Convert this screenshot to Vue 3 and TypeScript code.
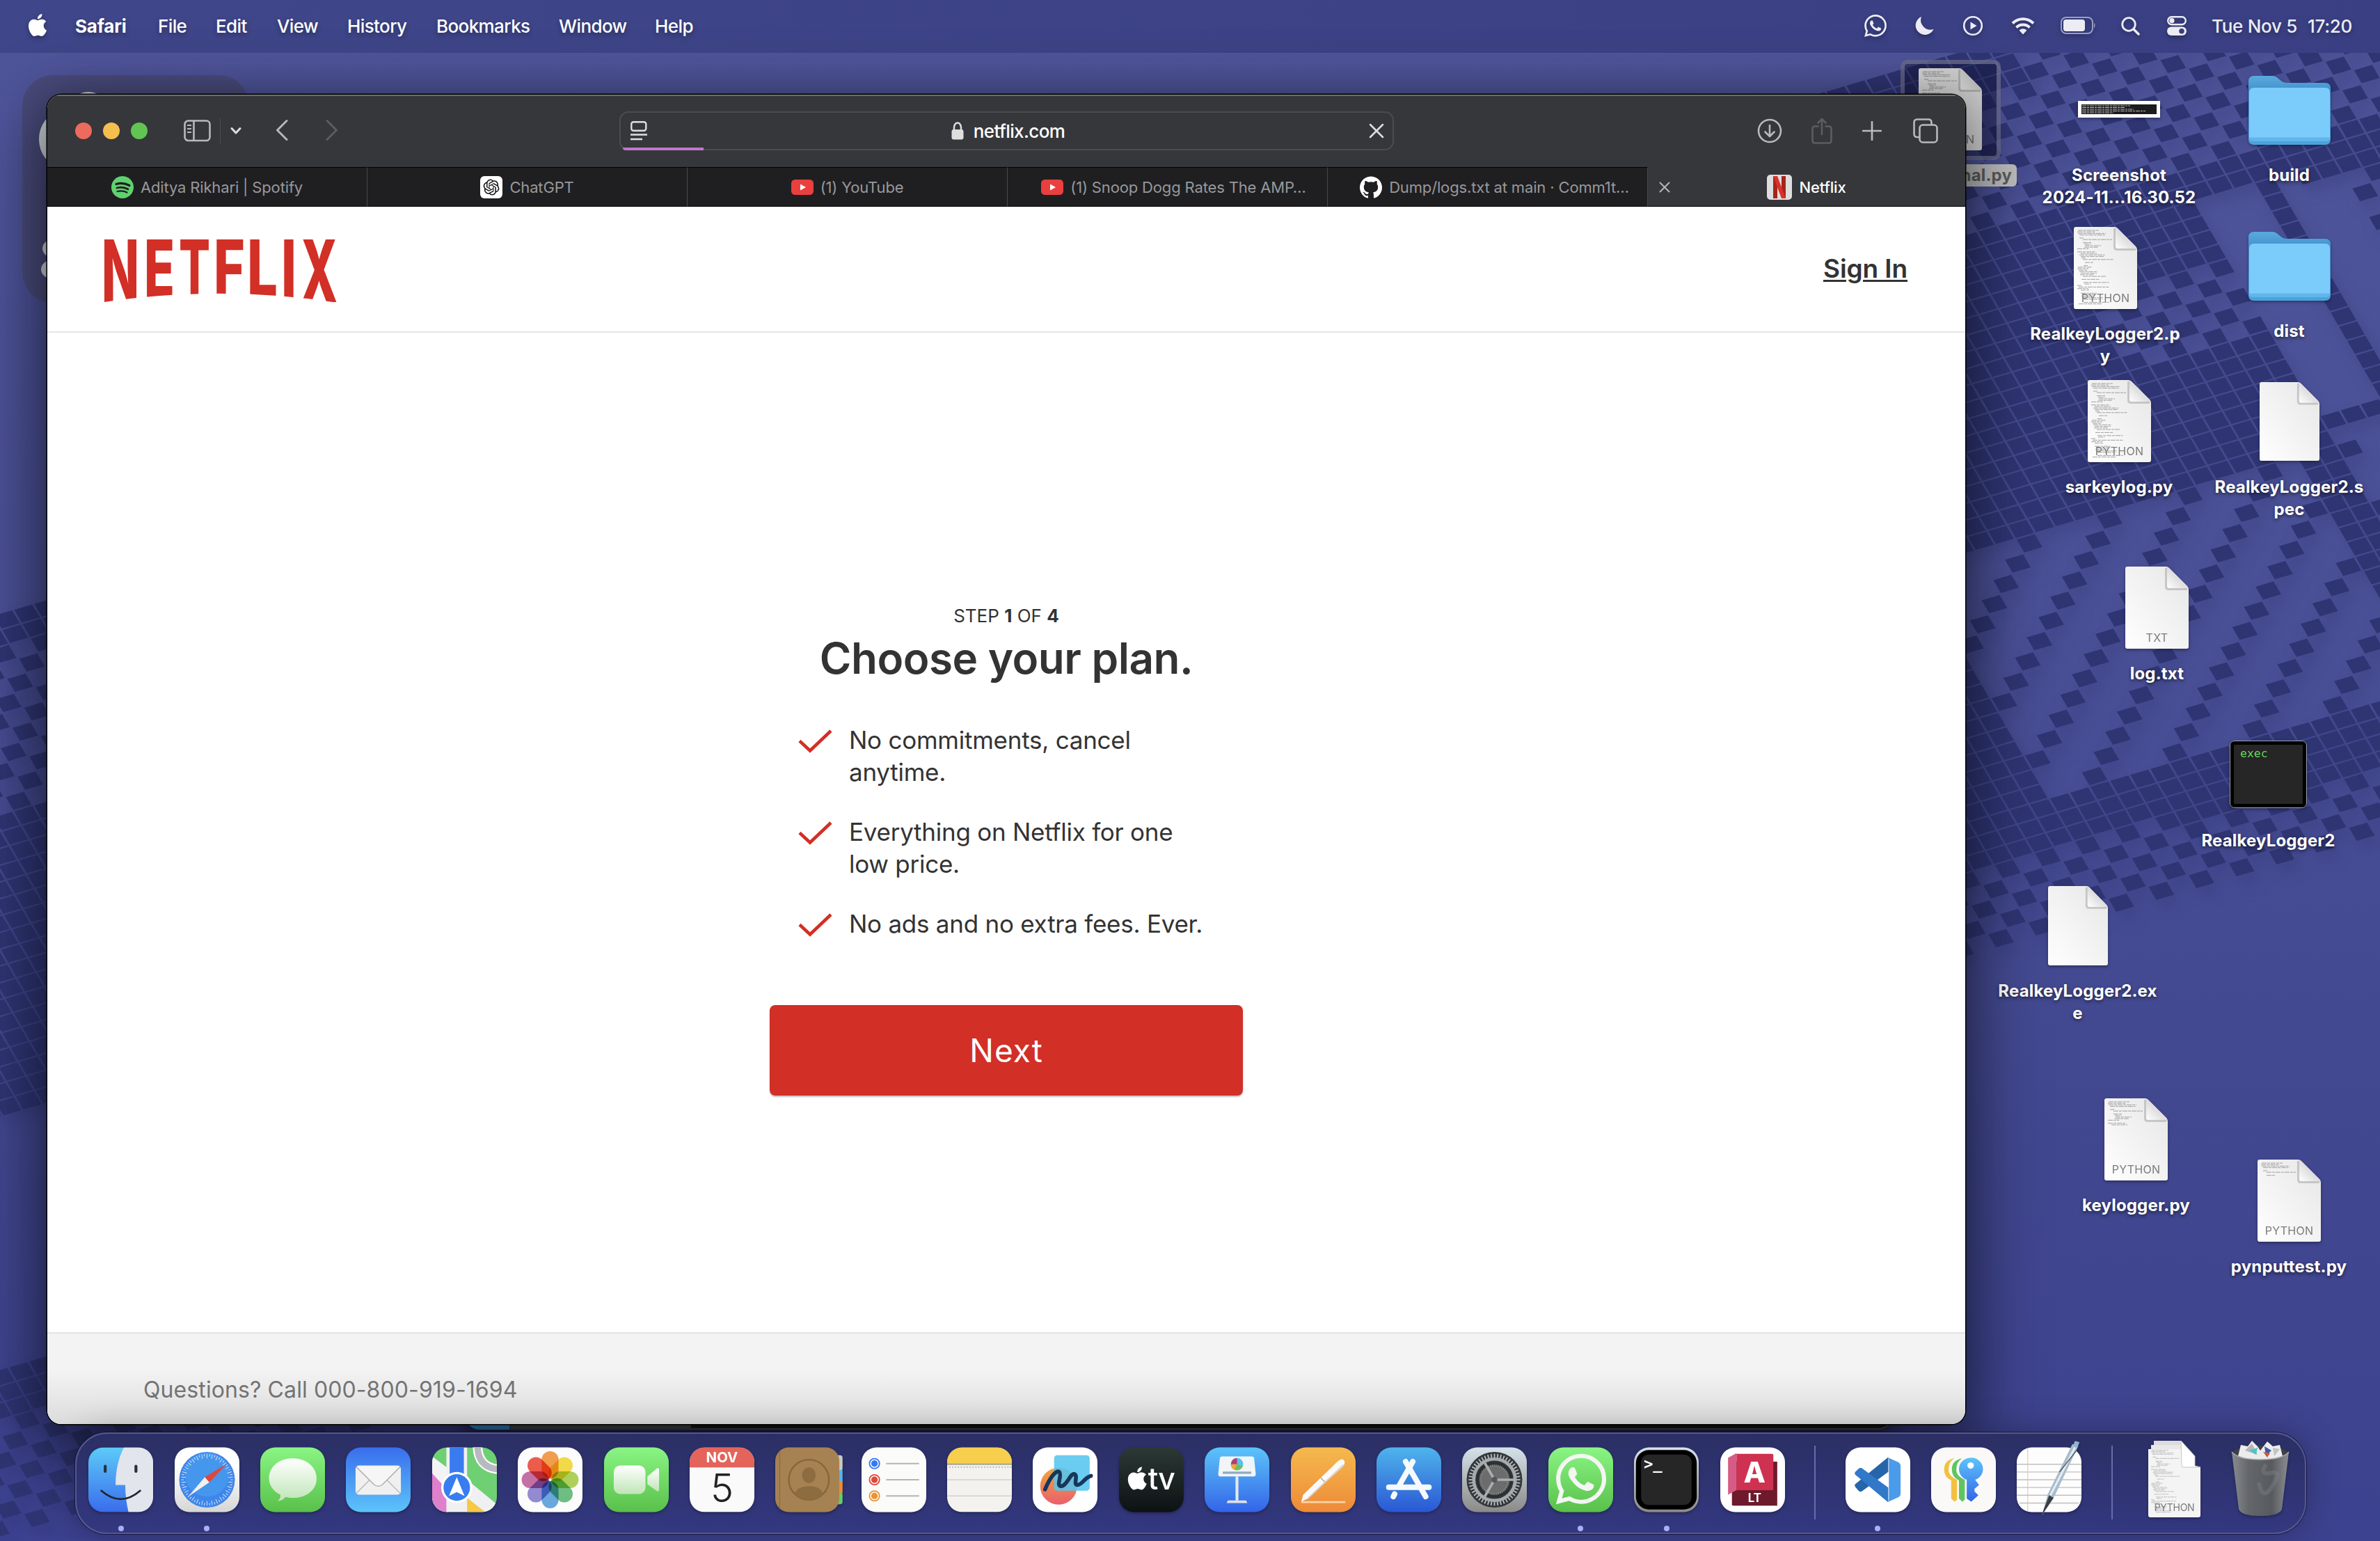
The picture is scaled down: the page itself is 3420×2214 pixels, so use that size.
<script setup lang="ts">
interface DesktopItem {
  kind: 'code' | 'doc' | 'folder' | 'shot' | 'exec'
  cx: number
  top: number
  w: number
  h: number
  base: number
  label: string[]
  tag?: string
  rows?: number
  selected?: boolean
}

const APPLE =
  'M12.152 6.896c-.948 0-2.415-1.078-3.96-1.04-2.04.027-3.91 1.183-4.961 3.014-2.117 3.675-.546 9.103 1.519 12.09 1.013 1.454 2.208 3.09 3.792 3.039 1.52-.065 2.09-.987 3.935-.987 1.831 0 2.35.987 3.96.948 1.637-.026 2.676-1.48 3.676-2.948 1.156-1.688 1.636-3.325 1.662-3.415-.039-.013-3.182-1.221-3.22-4.857-.026-3.04 2.48-4.494 2.597-4.559-1.429-2.09-3.623-2.324-4.39-2.376-2-.156-3.675 1.09-4.61 1.09zM15.53 3.83c.843-1.012 1.4-2.427 1.245-3.83-1.207.052-2.662.805-3.532 1.818-.78.896-1.454 2.338-1.273 3.714 1.338.104 2.715-.688 3.559-1.701'
const GITHUB =
  'M12 .297c-6.63 0-12 5.373-12 12 0 5.303 3.438 9.8 8.205 11.385.6.113.82-.258.82-.577 0-.285-.01-1.04-.015-2.04-3.338.724-4.042-1.61-4.042-1.61C4.422 18.07 3.633 17.7 3.633 17.7c-1.087-.744.084-.729.084-.729 1.205.084 1.838 1.236 1.838 1.236 1.07 1.835 2.809 1.305 3.495.998.108-.776.417-1.305.76-1.605-2.665-.3-5.466-1.332-5.466-5.93 0-1.31.465-2.38 1.235-3.22-.135-.303-.54-1.523.105-3.176 0 0 1.005-.322 3.3 1.23.96-.267 1.98-.399 3-.405 1.02.006 2.04.138 3 .405 2.28-1.552 3.285-1.23 3.285-1.23.645 1.653.24 2.873.12 3.176.765.84 1.23 1.91 1.23 3.22 0 4.61-2.805 5.625-5.475 5.92.42.36.81 1.096.81 2.22 0 1.606-.015 2.896-.015 3.286 0 .315.21.69.825.57C20.565 22.092 24 17.592 24 12.297c0-6.627-5.373-12-12-12'
const OPENAI =
  'M22.2819 9.8211a5.9847 5.9847 0 0 0-.5157-4.9108 6.0462 6.0462 0 0 0-6.5098-2.9A6.0651 6.0651 0 0 0 4.9807 4.1818a5.9847 5.9847 0 0 0-3.9977 2.9 6.0462 6.0462 0 0 0 .7427 7.0966 5.98 5.98 0 0 0 .511 4.9107 6.051 6.051 0 0 0 6.5146 2.9001A5.9847 5.9847 0 0 0 13.2599 24a6.0557 6.0557 0 0 0 5.7718-4.2058 5.9894 5.9894 0 0 0 3.9977-2.9001 6.0557 6.0557 0 0 0-.7475-7.0729zm-9.022 12.6081a4.4755 4.4755 0 0 1-2.8764-1.0408l.1419-.0804 4.7783-2.7582a.7948.7948 0 0 0 .3927-.6813v-6.7369l2.02 1.1686a.071.071 0 0 1 .038.052v5.5826a4.504 4.504 0 0 1-4.4945 4.4944zm-9.6607-4.1254a4.4708 4.4708 0 0 1-.5346-3.0137l.142.0852 4.783 2.7582a.7712.7712 0 0 0 .7806 0l5.8428-3.3685v2.3324a.0804.0804 0 0 1-.0332.0615L9.74 19.9502a4.4992 4.4992 0 0 1-6.1408-1.6464zM2.3408 7.8956a4.485 4.485 0 0 1 2.3655-1.9728V11.6a.7664.7664 0 0 0 .3879.6765l5.8144 3.3543-2.0201 1.1685a.0757.0757 0 0 1-.071 0l-4.8303-2.7865A4.504 4.504 0 0 1 2.3408 7.872zm16.5963 3.8558L13.1038 8.364 15.1192 7.2a.0757.0757 0 0 1 .071 0l4.8303 2.7913a4.4944 4.4944 0 0 1-.6765 8.1042v-5.6772a.79.79 0 0 0-.407-.667zm2.0107-3.0231l-.142-.0852-4.7735-2.7818a.7759.7759 0 0 0-.7854 0L9.409 9.2297V6.8974a.0662.0662 0 0 1 .0284-.0615l4.8303-2.7866a4.4992 4.4992 0 0 1 6.6802 4.66zM8.3065 12.863l-2.02-1.1638a.0804.0804 0 0 1-.038-.0567V6.0742a4.4992 4.4992 0 0 1 7.3757-3.4537l-.142.0805L8.704 5.459a.7948.7948 0 0 0-.3927.6813zm1.0976-2.3654l2.602-1.4998 2.6069 1.4998v2.9994l-2.5974 1.4997-2.6067-1.4997Z'
const WHATSAPP =
  'M17.472 14.382c-.297-.149-1.758-.867-2.03-.967-.273-.099-.471-.148-.67.15-.197.297-.767.966-.94 1.164-.173.199-.347.223-.644.075-.297-.15-1.255-.463-2.39-1.475-.883-.788-1.48-1.761-1.653-2.059-.173-.297-.018-.458.13-.606.134-.133.298-.347.446-.52.149-.174.198-.298.298-.497.099-.198.05-.371-.025-.52-.075-.149-.669-1.612-.916-2.207-.242-.579-.487-.5-.669-.51-.173-.008-.371-.01-.57-.01-.198 0-.52.074-.792.372-.272.297-1.04 1.016-1.04 2.479 0 1.462 1.065 2.875 1.213 3.074.149.198 2.096 3.2 5.077 4.487.709.306 1.262.489 1.694.625.712.227 1.36.195 1.871.118.571-.085 1.758-.719 2.006-1.413.248-.694.248-1.289.173-1.413-.074-.124-.272-.198-.57-.347m-5.421 7.403h-.004a9.87 9.87 0 01-5.031-1.378l-.361-.214-3.741.982.998-3.648-.235-.374a9.86 9.86 0 01-1.51-5.26c.001-5.45 4.436-9.884 9.888-9.884 2.64 0 5.122 1.03 6.988 2.898a9.825 9.825 0 012.893 6.994c-.003 5.45-4.437 9.884-9.885 9.884m8.413-18.297A11.815 11.815 0 0012.05 0C5.495 0 .16 5.335.157 11.892c0 2.096.547 4.142 1.588 5.945L.057 24l6.305-1.654a11.882 11.882 0 005.683 1.448h.005c6.554 0 11.89-5.335 11.893-11.893a11.821 11.821 0 00-3.48-8.413z'

const menus = [
  { t: 'Safari', w: 119 },
  { t: 'File', w: 83 },
  { t: 'Edit', w: 88 },
  { t: 'View', w: 101 },
  { t: 'History', w: 128 },
  { t: 'Bookmarks', w: 176 },
  { t: 'Window', w: 138 },
  { t: 'Help', w: 70 },
]

const tabs = [
  { icon: 'spotify', t: 'Aditya Rikhari | Spotify', shift: 0 },
  { icon: 'chatgpt', t: 'ChatGPT', shift: 0 },
  { icon: 'youtube', t: '(1) YouTube', shift: 0 },
  { icon: 'youtube', t: '(1) Snoop Dogg Rates The AMP…', shift: 18 },
  { icon: 'github', t: 'Dump/logs.txt at main · Comm1t…', shift: 20 },
  { icon: 'netflix', t: 'Netflix', shift: 0 },
]

// glyph, left edge, advance it is stretched to, baseline
const wordmark = [
  { c: 'N', x: 146, w: 54, b: 434 },
  { c: 'E', x: 207, w: 44, b: 427 },
  { c: 'T', x: 257, w: 45, b: 424 },
  { c: 'F', x: 307, w: 45, b: 422.5 },
  { c: 'L', x: 355, w: 44, b: 425 },
  { c: 'I', x: 404, w: 22, b: 427 },
  { c: 'X', x: 432, w: 53, b: 434 },
]

const perks = [
  ['No commitments, cancel', 'anytime.'],
  ['Everything on Netflix for one', 'low price.'],
  ['No ads and no extra fees. Ever.'],
]

const items: DesktopItem[] = [
  { kind: 'code', cx: 2802, top: 98, w: 91, h: 118, base: 260, label: ['RealkeyLoggerfinal.py'], tag: 'PYTHON', rows: 50, selected: true },
  { kind: 'shot', cx: 3045, top: 145, w: 118, h: 24, base: 260, label: ['Screenshot', '2024-11...16.30.52'] },
  { kind: 'folder', cx: 3289.5, top: 109, w: 118, h: 99, base: 260, label: ['build'] },
  { kind: 'code', cx: 3025, top: 326, w: 91, h: 118, base: 488, label: ['RealkeyLogger2.p', 'y'], tag: 'PYTHON', rows: 50 },
  { kind: 'folder', cx: 3289.5, top: 333, w: 118, h: 99, base: 484, label: ['dist'] },
  { kind: 'code', cx: 3045, top: 546, w: 91, h: 118, base: 708, label: ['sarkeylog.py'], tag: 'PYTHON', rows: 50 },
  { kind: 'doc', cx: 3289.5, top: 549, w: 86, h: 113, base: 708, label: ['RealkeyLogger2.s', 'pec'] },
  { kind: 'doc', cx: 3099.5, top: 814, w: 91, h: 118, base: 976, label: ['log.txt'], tag: 'TXT' },
  { kind: 'exec', cx: 3259.5, top: 1064, w: 111, h: 97, base: 1216, label: ['RealkeyLogger2'] },
  { kind: 'doc', cx: 2985.5, top: 1273, w: 86, h: 114, base: 1432, label: ['RealkeyLogger2.ex', 'e'] },
  { kind: 'code', cx: 3069.5, top: 1578, w: 91, h: 118, base: 1740, label: ['keylogger.py'], tag: 'PYTHON', rows: 16 },
  { kind: 'code', cx: 3289, top: 1666, w: 91, h: 118, base: 1828, label: ['pynputtest.py'], tag: 'PYTHON', rows: 9 },
]

// Miniature source listing printed on code documents
function listing(rows: number): string {
  let d = ''
  for (let r = 0; r < rows; r++) {
    if (r % 9 === 4 || r % 13 === 7) continue
    const h = (r * 73 + 19) % 31
    const indent = 5 + (Math.floor(r / 3) % 4) * 3 + (h % 3)
    const len = 6 + (h % 12) * 3.4
    const y = 5 + r * 2.2
    const end = Math.min(indent + len, y < 36 ? 55 : 78)
    d += `M${indent} ${y.toFixed(1)}H${end.toFixed(1)}`
  }
  return d
}

type Mode = 'none' | 'dense' | 'checker' | 'diag'
function modeAt(x: number, y: number): Mode {
  if (x < 1000) {
    const u = y + 0.27 * x
    if (u < 885) return 'none'
    if (u < 925) return 'dense'
    if (u < 1165) return 'checker'
    if (u < 1610) return 'dense'
    if (u < 1965) return 'none'
    if (u < 2030) return 'dense'
    if (u < 2200) return 'checker'
    return 'none'
  }
  const u = y + 0.29 * (x - 2824)
  const v = x - 0.58 * (y - 100)
  if (u < 80 || u > 1375) return 'none'
  if (u < 340) return x < 2900 && u < 150 ? 'dense' : 'checker'
  if (u < 395) return 'dense'
  if (u < 805) {
    if (v < 3055) return u > 490 && u < 600 && v > 2800 ? 'checker' : 'dense'
    if (v > 3150 && v < 3190) return 'dense'
    if (v > 3290) return 'checker'
    if (u > 735 && u < 760) return 'dense'
    return 'none'
  }
  if (u < 1185) {
    if (v < 2350) return 'dense'
    if (v > 2985 && v < 3040) return 'dense'
    return 'diag'
  }
  if (u < 1265) return 'dense'
  return 'checker'
}

function buildTiles(): string {
  let d = ''
  const at = (p: number, q: number) => [2881.2 + p * 28.8 + q * 12, 804.3 - p * 8.5 + q * 20.6]
  for (let j = -70; j < 80; j++) {
    for (let i = -140; i < 60; i++) {
      const [x, y] = at(i + 0.45, j + 0.45)
      if (x < -40 || x > 3460 || (x > 560 && x < 2600) || y < 40 || y > 2250) continue
      const m = modeAt(x, y)
      if (m === 'none') continue
      const k = i + j + 400
      if (m === 'checker' && k % 2) continue
      if (m === 'diag' && k % 4) continue
      const pts = [at(i, j), at(i + 0.9, j), at(i + 0.9, j + 0.9), at(i, j + 0.9)]
      d += 'M' + pts.map((p) => p[0].toFixed(1) + ' ' + p[1].toFixed(1)).join('L') + 'Z'
    }
  }
  return d
}
const tiles = buildTiles()

const petals = ['#f2953a', '#f3d834', '#a8cf4a', '#5fb878', '#5aa0dc', '#8a7fd0', '#c0629e', '#ee4b3a']
const ticks = Array.from({ length: 60 }, (_, i) => i * 6)
const teeth = Array.from({ length: 48 }, (_, i) => i * 7.5)
</script>

<template>
  <div class="screen">
    <svg class="wallpaper" viewBox="0 0 3420 2214" aria-hidden="true"><path :d="tiles" fill="#2f3573" /></svg>

    <header class="menubar">
      <svg class="apple" viewBox="0 0 24 24"><path :d="APPLE" fill="#fff" /></svg>
      <span v-for="(m, i) in menus" :key="m.t" class="menu" :class="{ bold: i === 0 }" :style="{ width: m.w + 'px' }">{{ m.t }}</span>
      <div class="status">
        <svg width="32" height="32" viewBox="0 0 24 24"><path :d="WHATSAPP" fill="#ececf4" /></svg>
        <svg class="ml40" width="28" height="28" viewBox="0 0 28 28"><path d="M10 1A13.5 13.5 0 1 0 27.500 19A14 14 0 0 1 10 1Z" fill="#ececf4" /></svg>
        <svg class="ml41" width="30" height="30" viewBox="0 0 30 30"><circle cx="15" cy="15" r="12.800" fill="none" stroke="#ececf4" stroke-width="2.600" /><path d="M11.500 9.500V20.500L20.500 15Z" fill="#ececf4" /></svg>
        <svg class="ml40" width="34" height="28" viewBox="0 0 34 28"><g fill="none" stroke="#ececf4" stroke-width="4"><path d="M2 10.500A21 21 0 0 1 32 10.500" /><path d="M7.500 16.500A13.500 13.500 0 0 1 26.500 16.500" /></g><path d="M11.500 20.500A8 8 0 0 1 22.500 20.500L17 26.500Z" fill="#ececf4" /></svg>
        <svg class="ml37" width="51" height="26" viewBox="0 0 51 26"><rect x="1" y="1" width="45" height="23" rx="7" fill="none" stroke="#9a9dc6" stroke-width="2" /><rect x="4" y="4" width="31" height="17" rx="4" fill="#ececf4" /><path d="M48 8.500Q51 12.500 48 16.500Z" fill="#9a9dc6" /></svg>
        <svg class="ml36" width="27" height="27" viewBox="0 0 27 27"><circle cx="11" cy="11" r="9.300" fill="none" stroke="#ececf4" stroke-width="2.800" /><path d="M18 18L25 25" stroke="#ececf4" stroke-width="3.400" stroke-linecap="round" /></svg>
        <svg class="ml39" width="28" height="28" viewBox="0 0 28 28"><rect x="1.200" y="1.200" width="25.600" height="11" rx="5.500" fill="none" stroke="#ececf4" stroke-width="2.400" /><circle cx="7" cy="6.700" r="3.600" fill="#ececf4" /><rect x="0" y="15.500" width="28" height="12.500" rx="6.200" fill="#ececf4" /><circle cx="21" cy="21.700" r="3.800" fill="#3a3f82" /></svg>
        <span class="date">Tue Nov 5</span><span class="time">17:20</span>
      </div>
    </header>

    <div class="widget"><i class="w1"></i><i class="w2"></i><i class="w3"></i><i class="w4"></i></div>

    <div
      v-for="(it, n) in items"
      :key="n"
      class="item"
      :class="{ selected: it.selected }"
      :style="{ left: it.cx - 150 + 'px', top: it.top + 'px' }"
    >
      <svg v-if="it.kind === 'code' || it.kind === 'doc'" class="pic" :width="it.w" :height="it.h" viewBox="0 0 91 118" preserveAspectRatio="none">
        <defs>
          <linearGradient :id="'pg' + n" x1="1" y1="0" x2="0" y2="1"><stop offset="0" stop-color="#e6e6e6" /><stop offset="1" stop-color="#fff" /></linearGradient>
          <linearGradient :id="'fd' + n" x1="1" y1="0" x2="0" y2="1"><stop offset=".5" stop-color="#dcdcdc" /><stop offset="1" stop-color="#fff" /></linearGradient>
        </defs>
        <path d="M3 0H58Q61 0 63 2L89 28Q91 30 91 33V115Q91 118 88 118H3Q0 118 0 115V3Q0 0 3 0Z" :fill="`url(#pg${n})`" />
        <path v-if="it.rows" :d="listing(it.rows)" stroke="#777" stroke-width=".9" stroke-dasharray="7 1 4 1" opacity=".75" />
        <path d="M59 2V29Q59 32 62 32H89" fill="none" stroke="#000" stroke-opacity=".16" stroke-width="4" />
        <path d="M60 0.500V28Q60 31 63 31H90.500Z" :fill="`url(#fd${n})`" />
        <text v-if="it.tag" x="45.500" y="108" text-anchor="middle" class="tag">{{ it.tag }}</text>
      </svg>
      <svg v-else-if="it.kind === 'folder'" class="pic" :width="it.w" :height="it.h" viewBox="0 0 118 99">
        <defs>
          <linearGradient id="fb" x1="0" y1="0" x2="0" y2="1"><stop offset="0" stop-color="#5aaade" /><stop offset=".2" stop-color="#4593cd" /><stop offset="1" stop-color="#4ba3dc" /></linearGradient>
        </defs>
        <path d="M0 8Q0 0 8 0H34Q39 0 43 4L48 8Q51 10 55 10H110Q118 10 118 18V91Q118 99 110 99H8Q0 99 0 91Z" fill="url(#fb)" />
        <path d="M1 24Q1 17 8 17H110Q117 17 117 24V89H1Z" fill="#7bcbfb" />
        <path d="M1 88.500H117V90Q117 93 113 94H5Q1 93 1 90Z" fill="#62b5ea" />
      </svg>
      <div v-else-if="it.kind === 'shot'" class="pic shot">
        <svg width="108" height="14" viewBox="0 0 108 14"><rect width="108" height="14" fill="#1c1c1e" /><path d="M1 2H70M1 4.500H62M1 7H75M1 9.500H92M1 12H46" stroke="#bbb" stroke-width="1" stroke-dasharray="6 1 3 1" /></svg>
      </div>
      <div v-else class="pic exec"><span>exec</span></div>
      <div class="label" :style="{ marginTop: it.base - 24 - it.top - it.h + 'px' }">
        <span v-for="l in it.label" :key="l">{{ l }}</span>
      </div>
    </div>

    <div class="backwin"><i></i><b></b></div>

    <main class="window">
      <div class="toolbar">
        <i class="light red"></i><i class="light yellow"></i><i class="light green"></i>
        <svg class="side" width="40" height="32" viewBox="0 0 40 32"><g fill="none" stroke="#b8b9bb" stroke-width="2.600"><rect x="1.500" y="1.500" width="36" height="28.500" rx="5" /><path d="M14.500 2V30" /></g><path d="M5 8H11M5 13H11M5 18H11" stroke="#b8b9bb" stroke-width="2" /></svg>
        <i class="vsep"></i>
        <svg class="chev" width="16" height="12" viewBox="0 0 16 12"><path d="M2 2.500L8 9L14 2.500" fill="none" stroke="#dcdcdd" stroke-width="3" stroke-linecap="round" stroke-linejoin="round" /></svg>
        <svg class="back" width="18" height="32" viewBox="0 0 18 32"><path d="M16 2.500L2.500 16L16 29.500" fill="none" stroke="#b8b9bb" stroke-width="2.900" stroke-linecap="round" stroke-linejoin="round" /></svg>
        <svg class="fwd" width="18" height="32" viewBox="0 0 18 32"><path d="M2 2.500L15.500 16L2 29.500" fill="none" stroke="#5c5d60" stroke-width="2.900" stroke-linecap="round" stroke-linejoin="round" /></svg>
        <div class="url">
          <svg width="24" height="28" viewBox="0 0 24 28"><rect x="1.300" y="1.300" width="21" height="12.500" rx="3" fill="none" stroke="#dededf" stroke-width="2.400" /><path d="M0 19.500H24M0 26H17" stroke="#dededf" stroke-width="2.400" /></svg>
          <div class="host">
            <svg width="18" height="26" viewBox="0 0 18 26"><path d="M4 13V8A5 6.500 0 0 1 14 8V13" fill="none" stroke="#dededf" stroke-width="2.500" /><rect x="0.500" y="11" width="17" height="14.500" rx="3" fill="#dededf" /></svg>
            <span>netflix.com</span>
          </div>
          <svg width="22" height="22" viewBox="0 0 22 22"><path d="M2 2L20 20M20 2L2 20" stroke="#dededf" stroke-width="2.500" stroke-linecap="round" /></svg>
          <i class="progress"></i>
        </div>
        <svg class="dl" width="36" height="36" viewBox="0 0 36 36"><g fill="none" stroke="#b8b9bb" stroke-width="2.600" stroke-linecap="round" stroke-linejoin="round"><circle cx="18" cy="18" r="16" /><path d="M18 10V26M11.500 19.500L18 26L24.500 19.500" /></g></svg>
        <svg class="share" width="30" height="38" viewBox="0 0 30 38"><g fill="none" stroke="#5c5d60" stroke-width="2.600" stroke-linecap="round" stroke-linejoin="round"><path d="M9.500 12.500H5Q1.500 12.500 1.500 16V33Q1.500 36.500 5 36.500H25Q28.500 36.500 28.500 33V16Q28.500 12.500 25 12.500H20.500" /><path d="M15 24V2M9.500 7.500L15 2L20.500 7.500" /></g></svg>
        <svg class="plus" width="28" height="28" viewBox="0 0 28 28"><path d="M14 1V27M1 14H27" stroke="#b8b9bb" stroke-width="2.700" stroke-linecap="round" /></svg>
        <svg class="copies" width="36" height="36" viewBox="0 0 36 36"><g fill="none" stroke="#b8b9bb" stroke-width="2.600"><path d="M9 27H6Q1.500 27 1.500 22.500V6Q1.500 1.500 6 1.500H22Q26.500 1.500 26.500 6V9" /><rect x="9.500" y="9.500" width="25" height="25" rx="4.500" /></g></svg>
      </div>

      <div class="tabs">
        <div v-for="(t, i) in tabs" :key="i" class="tab" :class="{ active: t.icon === 'netflix' }" :style="{ paddingLeft: t.shift + 'px' }">
          <svg v-if="t.icon === 'netflix'" class="x" width="16" height="16" viewBox="0 0 16 16"><path d="M1.500 1.500L14.500 14.500M14.500 1.500L1.500 14.500" stroke="#b5b6b8" stroke-width="2" stroke-linecap="round" /></svg>
          <svg v-if="t.icon === 'spotify'" width="32" height="32" viewBox="0 0 32 32"><circle cx="16" cy="16" r="16" fill="#5fd26f" /><g fill="none" stroke="#1f1f21" stroke-linecap="round"><path d="M7 11.500Q16.500 8.500 26 13.500" stroke-width="3.200" /><path d="M8 17Q16 14.500 24 18.800" stroke-width="2.700" /><path d="M8.500 22Q16 20 22.500 23.500" stroke-width="2.200" /></g></svg>
          <svg v-else-if="t.icon === 'chatgpt'" width="32" height="32" viewBox="0 0 32 32"><rect width="32" height="32" rx="6" fill="#fff" /><path :d="OPENAI" transform="translate(4.600 4.600) scale(.95)" fill="#111" /></svg>
          <svg v-else-if="t.icon === 'youtube'" width="32" height="22" viewBox="0 0 32 22"><rect width="32" height="22" rx="5.500" fill="#ea3f3f" /><path d="M13 6.500V15.500L21 11Z" fill="#fff" /></svg>
          <svg v-else-if="t.icon === 'github'" width="32" height="32" viewBox="0 0 24 24"><path :d="GITHUB" fill="#fff" /></svg>
          <svg v-else width="36" height="36" viewBox="0 0 36 36"><rect width="36" height="36" rx="5" fill="#dedede" /><rect x="9" y="2" width="6" height="32" fill="#a82419" /><rect x="21" y="2" width="6" height="32" fill="#a82419" /><path d="M9 2H15L27 34H21Z" fill="#d8322a" /></svg>
          <span>{{ t.t }}</span>
        </div>
      </div>

      <div class="nhead">
        <svg class="brand" width="340" height="150" viewBox="146 311 340 150" role="img" aria-label="Netflix">
          <defs><clipPath id="arc"><path d="M140 344H490V435.500Q315 408 140 435.500Z" /></clipPath></defs>
          <g clip-path="url(#arc)">
            <text v-for="g in wordmark" :key="g.c" x="0" y="0" :textLength="g.w" lengthAdjust="spacingAndGlyphs" :transform="`translate(${g.x} ${g.b}) scale(1 ${(g.b - 344) / 72.700})`">{{ g.c }}</text>
          </g>
        </svg>
        <a class="signin">Sign In</a>
      </div>

      <section class="plan">
        <div class="step">STEP <b>1</b> OF <b>4</b></div>
        <h1>Choose your plan.</h1>
        <ul>
          <li v-for="(p, i) in perks" :key="i">
            <svg width="50" height="36" viewBox="0 0 50 36"><path d="M3 17.500L18 31.500L48 3" fill="none" stroke="#d22f27" stroke-width="4.600" /></svg>
            <p><span v-for="l in p" :key="l">{{ l }}</span></p>
          </li>
        </ul>
        <button>Next</button>
      </section>

      <footer class="foot"><span>Questions? Call 000-800-919-1694</span></footer>
    </main>

    <nav class="dock">
      <div class="slot run"><svg viewBox="0 0 100 100">
        <defs><clipPath id="sq"><rect width="100" height="100" rx="23" /></clipPath>
          <linearGradient id="gFind" x1="0" y1="0" x2="0" y2="1"><stop offset="0" stop-color="#5ccbf8" /><stop offset="1" stop-color="#3a6cec" /></linearGradient>
          <linearGradient id="gWhite" x1="0" y1="0" x2="0" y2="1"><stop offset=".3" stop-color="#fff" /><stop offset="1" stop-color="#d6d6d6" /></linearGradient>
          <linearGradient id="gGreen" x1="0" y1="0" x2="0" y2="1"><stop offset="0" stop-color="#8af584" /><stop offset="1" stop-color="#59c04a" /></linearGradient>
          <linearGradient id="gBub" x1="0" y1="0" x2="0" y2="1"><stop offset="0" stop-color="#fff" /><stop offset="1" stop-color="#bfe5b6" /></linearGradient>
          <linearGradient id="gMail" x1="0" y1="0" x2="0" y2="1"><stop offset="0" stop-color="#396eed" /><stop offset="1" stop-color="#5cc4fa" /></linearGradient>
          <linearGradient id="gSky" x1="0" y1="0" x2="0" y2="1"><stop offset="0" stop-color="#5cc4fa" /><stop offset="1" stop-color="#3364e8" /></linearGradient>
          <linearGradient id="gOr" x1="0" y1="0" x2="0" y2="1"><stop offset="0" stop-color="#f5b94e" /><stop offset="1" stop-color="#ee8a38" /></linearGradient>
          <linearGradient id="gGray" x1="0" y1="0" x2="0" y2="1"><stop offset="0" stop-color="#d5e2ea" /><stop offset="1" stop-color="#8b8a88" /></linearGradient>
        </defs>
        <g clip-path="url(#sq)"><rect width="100" height="100" fill="url(#gFind)" /><path d="M55 0H100V100H62Q57 80 57 58H42Q42 25 55 0Z" fill="#e2e5eb" /></g>
        <path d="M26 29V37M73.500 29V37" stroke="#26303c" stroke-width="4.500" stroke-linecap="round" /><path d="M20 67Q50 93 80 67" fill="none" stroke="#1f2630" stroke-width="3" stroke-linecap="round" />
      </svg></div>
      <div class="slot run"><svg viewBox="0 0 100 100"><rect width="100" height="100" rx="23" fill="url(#gWhite)" /><circle cx="50" cy="50" r="43" fill="#3f86ea" /><circle cx="50" cy="42" r="34" fill="#4aa2ee" opacity=".6" />
        <path v-for="a in ticks" :key="a" :d="a % 12 ? 'M50 10V14' : 'M50 10V17'" :transform="`rotate(${a} 50 50)`" stroke="#d8eafc" stroke-width="1" />
        <path d="M81 25L46.500 46L53.500 54Z" fill="#e2463a" /><path d="M21 76L46.500 46L53.500 54Z" fill="#f1f1f1" /></svg></div>
      <div class="slot"><svg viewBox="0 0 100 100"><rect width="100" height="100" rx="23" fill="url(#gGreen)" /><path d="M50 17C71 17 87 30 87 48S71 78 50 78C46 78 43 77.500 39 76.500Q35 82 27 83Q32 78 31 73C20 68 13.500 58 13.500 48C13.500 30 29 17 50 17Z" fill="url(#gBub)" /></svg></div>
      <div class="slot"><svg viewBox="0 0 100 100"><rect width="100" height="100" rx="23" fill="url(#gMail)" /><rect x="15" y="28" width="70" height="45" rx="5" fill="#f0f0f0" /><path d="M16 71L37 50M84 71L63 50" stroke="#b9b9b9" stroke-width="1.500" /><path d="M16 30L43 57Q50 63 57 57L84 30" fill="#f6f6f6" stroke="#b0b0b0" stroke-width="1.600" /></svg></div>
      <div class="slot"><svg viewBox="0 0 100 100"><g clip-path="url(#sq)"><rect width="100" height="100" fill="#6fd073" /><path d="M0 14L24 32V100H0Z" fill="#f3f3f5" /><path d="M0 40L24 66V100H0Z" fill="#df80cc" /><path d="M22 0H54V100H22Z" fill="#f0f0f3" /><path d="M27 0H49V60H27Z" fill="#3a7cf0" /><path d="M54 50L100 88V100H54Z" fill="#f0f0f2" /><path d="M54 78L82 100H54Z" fill="#f6c843" /><path d="M70 -4Q70 32 104 34" fill="none" stroke="#fff" stroke-width="15" /><path d="M70 -4Q70 32 104 34" fill="none" stroke="#b9b9c2" stroke-width="10" /></g><circle cx="38" cy="62" r="24" fill="#fff" /><circle cx="38" cy="62" r="20.500" fill="#377df0" /><path d="M38 46L50 75L38 69L26 75Z" fill="#fff" /></svg></div>
      <div class="slot"><svg viewBox="0 0 100 100"><rect width="100" height="100" rx="23" fill="#fcfcfc" /><g class="petals"><rect v-for="(c, i) in petals" :key="c" x="37" y="6" width="26" height="42" rx="13" :fill="c" :transform="`rotate(${i * 45} 50 50)`" /></g></svg></div>
      <div class="slot"><svg viewBox="0 0 100 100"><rect width="100" height="100" rx="23" fill="url(#gGreen)" /><rect x="15" y="28" width="49" height="44" rx="10" fill="url(#gBub)" /><path d="M67 45L81 33Q85 30 85 35V65Q85 70 81 67L67 57Z" fill="url(#gBub)" /></svg></div>
      <div class="slot"><svg viewBox="0 0 100 100"><g clip-path="url(#sq)"><rect width="100" height="100" fill="#fafafa" /><rect width="100" height="31" fill="#e4635a" /></g><text x="50" y="23.500" text-anchor="middle" class="nov">NOV</text><text x="50" y="84" text-anchor="middle" class="five">5</text></svg></div>
      <div class="slot"><svg viewBox="0 0 100 100"><rect x="70" y="12" width="34" height="24" rx="4" fill="#c9c9c4" /><rect x="70" y="35" width="34" height="19" fill="#5ab4ea" /><rect x="70" y="53" width="34" height="18" fill="#f08c30" /><rect x="70" y="70" width="34" height="18" rx="4" fill="#62cf62" /><rect width="99" height="100" rx="21" fill="#a68252" /><path d="M7 4V96" stroke="#7f6038" stroke-width="1.500" opacity=".6" /><circle cx="52" cy="50" r="31" fill="none" stroke="#85663b" stroke-width="2.500" /><ellipse cx="52" cy="43" rx="10.500" ry="12" fill="#8d6c40" /><path d="M30 72Q34 60 52 60T74 72Q65 81 52 81T30 72Z" fill="#8d6c40" /></svg></div>
      <div class="slot"><svg viewBox="0 0 100 100"><rect width="100" height="100" rx="23" fill="#fbfbfa" /><g stroke-width="2" fill="none"><circle cx="20" cy="25" r="7.700" stroke="#3478f6" /><circle cx="20" cy="50" r="7.700" stroke="#e2483d" /><circle cx="20" cy="75" r="7.700" stroke="#ea9433" /></g><circle cx="20" cy="25" r="5" fill="#3478f6" /><circle cx="20" cy="50" r="5" fill="#e2483d" /><circle cx="20" cy="75" r="5" fill="#ea9433" /><path d="M38 25H89M38 50H89M38 75H89" stroke="#b4b4b4" stroke-width="2" /></svg></div>
      <div class="slot"><svg viewBox="0 0 100 100"><g clip-path="url(#sq)"><rect width="100" height="100" fill="#f3f2ee" /><rect width="100" height="25" fill="#f8cf4d" /><path d="M0 26H100" stroke="#a9a494" stroke-width="2.500" /><path d="M3 30.500H100" stroke="#b5b5b0" stroke-width="1.800" stroke-dasharray="2 2.500" /><path d="M0 50H100M0 75H100" stroke="#d2d1cd" stroke-width="1.800" /></g></svg></div>
      <div class="slot"><svg viewBox="0 0 100 100"><rect width="100" height="100" rx="23" fill="#fff" /><defs><linearGradient id="gFree" x1="0" y1="0" x2="0" y2="1"><stop offset="0" stop-color="#f0a63c" /><stop offset="1" stop-color="#ea5f6c" /></linearGradient></defs><circle cx="40" cy="60" r="28.500" fill="url(#gFree)" /><rect x="33" y="12" width="55" height="55" rx="5" fill="#55c5ee" opacity=".88" /><path d="M19 65C26 48 36 34 41 38C46 43 36 58 43 60C52 61 58 40 64 41C71 43 62 58 69 58C77 58 80 46 90 44" fill="none" stroke="#17375a" stroke-width="6" stroke-linecap="round" /></svg></div>
      <div class="slot"><svg viewBox="0 0 100 100"><defs><linearGradient id="gTv" x1="0" y1="0" x2="0" y2="1"><stop offset="0" stop-color="#2c3935" /><stop offset="1" stop-color="#0d1113" /></linearGradient></defs><rect width="100" height="100" rx="23" fill="url(#gTv)" /><path :d="APPLE" transform="translate(10.500 30) scale(1.480)" fill="#fff" /><text x="45" y="65.500" class="tv">tv</text></svg></div>
      <div class="slot"><svg viewBox="0 0 100 100"><rect width="100" height="100" rx="23" fill="url(#gSky)" /><path d="M27 14H73Q76 14 76.500 17L79 41Q79 45 75 45H25Q21 45 21 41L23.500 17Q24 14 27 14Z" fill="#f2f5f8" /><path d="M28 39H72" stroke="#94a9bf" stroke-width="3.500" /><circle cx="50" cy="26" r="9.500" fill="#6fbf5c" /><path d="M50 26V16.500A9.500 9.500 0 0 1 59 29Z" fill="#5ac0ee" /><path d="M50 26V16.500A9.500 9.500 0 0 0 40.600 26Z" fill="#b23d7e" /><path d="M50 26H40.500A9.500 9.500 0 0 0 46 34.500Z" fill="#f0a63c" /><path d="M50 45V82" stroke="#e4e8ec" stroke-width="4.500" /><path d="M36 82H64L66 86H34Z" fill="#dfe2e6" /></svg></div>
      <div class="slot"><svg viewBox="0 0 100 100"><rect width="100" height="100" rx="23" fill="url(#gOr)" /><path d="M16 84.500H84" stroke="#fbd3a6" stroke-width="3" /><path d="M73 21Q79 16 82 20T80 30L26 79L16 84L19 73Z" fill="#fbfaf8" /><path d="M46 47L53 54" stroke="#b0a090" stroke-width="1.500" /><path d="M81 27L25 80" stroke="#d6d0ca" stroke-width="2" /></svg></div>
      <div class="slot"><svg viewBox="0 0 100 100"><defs><linearGradient id="gStore" x1="0" y1="0" x2="0" y2="1"><stop offset="0" stop-color="#4fb4ec" /><stop offset="1" stop-color="#2a57d4" /></linearGradient></defs><rect width="100" height="100" rx="23" fill="url(#gStore)" /><g stroke="#f7fafd" stroke-width="8.500" stroke-linecap="round"><path d="M45 22L76 76" /><path d="M19 61.500H81" /><path d="M56 22L35 59" /><path d="M28 72L26 76" /></g></svg></div>
      <div class="slot"><svg viewBox="0 0 100 100"><rect width="100" height="100" rx="23" fill="url(#gGray)" /><circle cx="50" cy="50" r="43" fill="#34383b" /><path v-for="a in teeth" :key="a" d="M50 10V16" :transform="`rotate(${a} 50 50)`" stroke="#b6bbbe" stroke-width="2" /><circle cx="50" cy="50" r="32" fill="none" stroke="#a6abae" stroke-width="5" /><circle cx="50" cy="50" r="22" fill="#6b6c6c" stroke="#8b8f91" stroke-width="3" stroke-dasharray="1.500 1.500" /><circle cx="50" cy="50" r="26" fill="none" stroke="#2b2f31" stroke-width="3" /><path d="M50 50H80M50 50L35 24M50 50L35 76" stroke="#a9adb0" stroke-width="4" /><circle cx="50" cy="50" r="4.500" fill="#54585a" /></svg></div>
      <div class="slot run"><svg viewBox="0 0 100 100"><rect width="100" height="100" rx="23" fill="url(#gGreen)" /><path :d="WHATSAPP" transform="translate(11.500 10) scale(3.250)" fill="#f4f6f4" /></svg></div>
      <div class="slot run"><svg viewBox="0 0 100 100"><rect width="100" height="100" rx="23" fill="url(#gGray)" /><rect x="3" y="4" width="94" height="92" rx="20" fill="#000" /><rect x="11" y="11" width="78" height="78" rx="12" fill="#262626" /><text x="15" y="34" class="prompt">&gt;_</text></svg></div>
      <div class="slot"><svg viewBox="0 0 100 100"><rect width="100" height="100" rx="23" fill="#fff" /><path d="M18 22H88V90H20Q18 90 18 88Z" fill="#6e1a2c" /><path d="M25 10H80Q82 10 82 12V66H25Z" fill="#cf3150" /><path d="M12 16L25 9V66L12 73Z" fill="#d75c85" /><text x="53" y="54" text-anchor="middle" class="cadA">A</text><text x="53" y="84" text-anchor="middle" class="cadL">LT</text></svg></div>
      <i class="dsep"></i>
      <div class="slot run"><svg viewBox="0 0 100 100"><rect width="100" height="100" rx="23" fill="#fff" /><path d="M66 15V38L25 68Q22 69 20 67L15 61Q13 58 16 56Z" fill="#2765ab" /><path d="M66 85V62L25 32Q22 31 20 33L15 38Q13 41 16 43Z" fill="#3278c8" /><path d="M64 15L82 23Q85 25 85 28V72Q85 75 82 77L64 85Q67 84 67 79V21Q67 16 64 15Z" fill="#4a9bea" /></svg></div>
      <div class="slot"><svg viewBox="0 0 100 100"><rect width="100" height="100" rx="23" fill="#faf9f8" /><path d="M36 17Q20 20 20 34Q20 46 31 51V79L36 84L40 81V50Q26 44 27 34Q27 22 36 17Z" fill="#f3c03f" /><path d="M48 17Q32 20 32 34Q32 46 43 51V79L48 84L52 81V50Q38 44 39 34Q39 22 48 17Z" fill="#5fc55f" /><path d="M61 16A18 17.500 0 0 1 68 50L74 58L67 64V68L73 74L62 84L55 79V50A18 17.500 0 0 1 61 16Z" fill="url(#gSky)" /><circle cx="61" cy="28" r="5" fill="#fff" /></svg></div>
      <div class="slot"><svg viewBox="0 0 100 100"><rect width="100" height="100" rx="23" fill="#fdfdfd" /><path d="M0 26H100M0 38H100M0 50H100M0 62H100M0 74H100M4 86H96" stroke="#c0c0c0" stroke-width="1.500" /><path d="M17 1V99" stroke="#f0b0b0" stroke-width="1" /><path d="M86 -5L95 -2L58 76L39 105L48 72Z" fill="#a9bccb" /><path d="M90 0L52 74" stroke="#e4eef5" stroke-width="3" /><path d="M93 4L66 38" stroke="#4d5a66" stroke-width="1.500" /><path d="M50 74L57 78L38 106Z" fill="#3a3f46" /><path d="M90 -10L97 -8L94 0L87 -3Z" fill="#8fb4d4" /></svg></div>
      <i class="dsep"></i>
      <div class="slot tall"><svg width="75" height="110" viewBox="0 0 75 110"><path d="M8 0H47L68 38V106H8Z" fill="#dcdcdc" /><path d="M4 6H48L70 40V108H4Z" fill="#e8e8e8" /><path d="M0 12H48V38H75V107Q75 110 72 110H3Q0 110 0 107Z" fill="#f4f4f4" /><path :d="listing(46)" stroke="#777" stroke-width=".9" stroke-dasharray="7 1 4 1" opacity=".6" transform="translate(0 9) scale(.8 .9)" /><path d="M47 0L67 22V36L75 38H51Q48 38 48 35Z" fill="#fff" stroke="#c6c6c6" stroke-width="1" /><text x="37.500" y="101" text-anchor="middle" class="tag sm">PYTHON</text></svg></div>
      <div class="slot tall"><svg width="84" height="110" viewBox="0 0 84 110"><defs><linearGradient id="gBin" x1="0" y1="0" x2="1" y2="0"><stop offset="0" stop-color="#8d9092" /><stop offset=".3" stop-color="#66696b" /><stop offset=".7" stop-color="#5a5d5f" /><stop offset="1" stop-color="#909395" /></linearGradient></defs><ellipse cx="42" cy="18" rx="40" ry="11" fill="#3d4044" /><path d="M10 22L14 6L24 8L30 0L38 8L42 14L52 1L60 8L70 6L74 22Q42 34 10 22Z" fill="#ececec" /><path d="M20 14L30 4L38 20Z" fill="#b6b6b6" /><path d="M26 14L38 10L36 20Z" fill="#4fc3c9" /><path d="M48 8L58 14L50 22Z" fill="#3b5aa8" /><path d="M46 16L56 18L52 24Z" fill="#cf5a32" /><path d="M60 10L70 12L62 22Z" fill="#c2c2c2" /><path d="M1 16Q10 27 42 27T83 16L73 98Q70 108 42 108T11 98Z" fill="url(#gBin)" opacity=".96" /><path d="M1 16Q10 27 42 27T83 16" fill="none" stroke="#a6a9ab" stroke-width="1.500" /><path d="M50 34Q40 50 58 46T56 70Q44 84 40 60" fill="none" stroke="#85888a" stroke-width="6" opacity=".35" /></svg></div>
    </nav>
  </div>
</template>

<style>
html,
body {
  margin: 0;
  background: #454b92;
}
</style>

<style scoped>
.screen {
  position: relative;
  width: 3420px;
  height: 2214px;
  overflow: hidden;
  font-family: Inter, 'Liberation Sans', sans-serif;
  background: linear-gradient(180deg, #4f559a 0%, #4a5096 40%, #41478f 75%, #3d4290 100%);
}
.wallpaper {
  position: absolute;
  inset: 0;
  width: 3420px;
  height: 2214px;
  filter: drop-shadow(8px 12px 10px rgba(35, 38, 100, 0.25));
}
.menubar {
  position: relative;
  display: flex;
  align-items: center;
  box-sizing: border-box;
  height: 76px;
  padding: 0 33px 2px 38px;
  background: linear-gradient(90deg, #3f4689, #393f82);
  color: #fff;
  font-size: 26px;
  font-weight: 500;
  letter-spacing: -0.6px;
  text-shadow: 0 3px 6px rgba(0, 0, 0, 0.3);
}
.apple {
  width: 32px;
  height: 32px;
  margin: -2px 38px 0 0;
  filter: drop-shadow(0 3px 3px rgba(0, 0, 0, 0.3));
}
.menu {
  white-space: nowrap;
}
.menu.bold {
  font-weight: 700;
  letter-spacing: -0.2px;
}
.status {
  display: flex;
  align-items: center;
  margin-left: auto;
  color: #ececf4;
  letter-spacing: -0.3px;
}
.status svg {
  filter: drop-shadow(0 3px 3px rgba(0, 0, 0, 0.3));
}
.ml40 { margin-left: 40px; }
.ml41 { margin-left: 41px; }
.ml37 { margin-left: 37px; }
.ml36 { margin-left: 36px; }
.ml39 { margin-left: 39px; }
.date {
  width: 138px;
  margin-left: 36px;
  white-space: nowrap;
}
.time {
  width: 71px;
  white-space: nowrap;
}
.widget {
  position: absolute;
  left: 32px;
  top: 108px;
  width: 326px;
  height: 327px;
  border-radius: 44px;
  background: #4a4b7c;
  overflow: hidden;
}
.widget i {
  position: absolute;
  border-radius: 50%;
  background: #cdd6dc;
}
.w1 { left: 24px; top: 54px; width: 60px; height: 76px; }
.w2 { left: 80px; top: 24px; width: 30px; height: 14px; }
.w3 { left: 29px; top: 234px; width: 40px; height: 30px; }
.w4 { left: 27px; top: 264px; width: 40px; height: 30px; }

.item {
  position: absolute;
  width: 300px;
  display: flex;
  flex-direction: column;
  align-items: center;
}
.pic {
  flex: none;
  filter: drop-shadow(0 2px 2px rgba(0, 0, 0, 0.35));
}
.label {
  display: flex;
  flex-direction: column;
  align-items: center;
  color: #fff;
  font-size: 24px;
  font-weight: 700;
  line-height: 32px;
  letter-spacing: 0.15px;
  white-space: nowrap;
  text-shadow: 0 2px 5px rgba(0, 0, 0, 0.6);
}
.item.selected::before {
  content: '';
  position: absolute;
  left: 79px;
  top: -12px;
  width: 132px;
  height: 132px;
  border: 6px solid rgba(150, 152, 180, 0.5);
  border-radius: 10px;
  background: rgba(10, 12, 40, 0.4);
}
.item.selected .pic {
  position: relative;
  filter: brightness(0.88);
}
.item.selected .label {
  align-self: flex-end;
  margin-right: 54px;
  padding: 0 7px;
  border-radius: 6px;
  background: #bdbdbd;
  color: #5c5c5c;
  text-shadow: none;
}
.tag {
  font: 400 16px Inter, sans-serif;
  letter-spacing: 0.3px;
  fill: #7c7c7c;
}
.tag.sm {
  font-size: 14px;
  letter-spacing: -0.3px;
}
.shot {
  display: flex;
  align-items: center;
  justify-content: center;
  width: 118px;
  height: 24px;
  background: #fff;
}
.exec {
  box-sizing: border-box;
  width: 111px;
  height: 97px;
  padding: 0;
  border: 6px solid #000;
  border-radius: 7px;
  outline: 1.5px solid #9aa3ad;
  outline-offset: -1px;
  background: #262626;
}
.exec span {
  display: block;
  padding: 3px 0 0 9px;
  color: #67dd62;
  font: 16.500px/20px 'DejaVu Sans Mono', monospace;
}
.backwin {
  position: absolute;
  left: 669px;
  top: 2000px;
  width: 2050px;
  height: 54px;
  display: flex;
  border-radius: 0 0 20px 20px;
  box-shadow: inset 0 -2px 0 #555, 0 6px 30px rgba(0, 0, 0, 0.6);
  background: #1c1c1c;
  overflow: hidden;
}
.backwin i { width: 63px; background: #3a9ae6; }
.backwin b { width: 261px; background: #4c4f52; }

.window {
  position: absolute;
  left: 68px;
  top: 136px;
  width: 2756px;
  height: 1910px;
  display: flex;
  flex-direction: column;
  border-radius: 20px;
  overflow: hidden;
  background: #fff;
  box-shadow: 0 0 0 1.500px #000, 0 36px 100px 10px rgba(0, 0, 0, 0.5), 0 0 60px rgba(0, 0, 0, 0.2);
}
.toolbar {
  flex: none;
  display: flex;
  align-items: center;
  box-sizing: border-box;
  height: 104px;
  padding-left: 40px;
  background: #36373a;
  box-shadow: inset 0 2px 0 #6d6e70;
}
.toolbar > * {
  flex: none;
}
.light {
  width: 24px;
  height: 24px;
  margin-right: 16px;
  border-radius: 50%;
}
.red { background: #ec6a5e; }
.yellow { background: #f4bf4f; }
.green { background: #61c554; margin-right: 52px; }
.vsep { width: 1px; height: 36px; margin: 0 14px 0 12px; background: #4c4d50; }
.back { margin-left: 49px; margin-top: -2px; }
.fwd { margin-left: 54px; margin-top: -2px; }
.url {
  position: relative;
  display: flex;
  align-items: center;
  justify-content: space-between;
  box-sizing: border-box;
  width: 1113px;
  height: 56px;
  margin-left: 404px;
  padding: 0 12px 0 14px;
  border: 2px solid #4b4c50;
  border-radius: 13px;
}
.host {
  display: flex;
  align-items: center;
  gap: 14px;
  color: #fff;
  font-size: 26px;
  font-weight: 500;
  letter-spacing: -0.6px;
}
.progress {
  position: absolute;
  left: 3px;
  bottom: -2px;
  width: 116px;
  height: 4px;
  border-bottom-left-radius: 4px;
  background: #bf77cc;
}
.dl { margin-left: 522px; }
.share { margin-left: 42px; }
.plus { margin-left: 43px; }
.copies { margin-left: 45px; }
.tabs {
  flex: none;
  display: flex;
  box-sizing: border-box;
  height: 57px;
  background: #1f1f21;
}
.tab {
  position: relative;
  display: flex;
  align-items: center;
  justify-content: center;
  gap: 10px;
  box-sizing: border-box;
  width: 460px;
  padding-top: 1px;
  border-top: 1px solid #000;
  border-bottom: 1px solid #000;
  border-right: 1px solid #48484b;
  color: #98989b;
  font-size: 22px;
  letter-spacing: -0.15px;
  white-space: nowrap;
}
.tab svg { flex: none; }
.tab.active {
  flex: 1;
  border-right: 0;
  border-top-color: #36373a;
  background: #36373a;
  color: #fff;
  font-weight: 500;
}
.tab .x {
  position: absolute;
  left: 16px;
  top: 20px;
}
.nhead {
  flex: none;
  display: flex;
  justify-content: space-between;
  box-sizing: border-box;
  height: 181px;
  padding: 14px 83px 0 78px;
  border-bottom: 2px solid #e6e6e6;
}
.brand text {
  font: 800 100px Inter, sans-serif;
  fill: #d22f27;
}
.signin {
  margin-top: 52px;
  height: 50px;
  color: #333;
  font-size: 37px;
  font-weight: 600;
  line-height: 46px;
  letter-spacing: -0.1px;
  text-decoration: underline;
  text-decoration-thickness: 3px;
  text-underline-offset: 3px;
}
.plan {
  flex: 1;
  display: flex;
  flex-direction: column;
  align-items: center;
  color: #333;
}
.step {
  margin-top: 391px;
  font-size: 26px;
  line-height: 32px;
  letter-spacing: 0;
}
.plan h1 {
  margin: 6px 0 0;
  font-size: 62px;
  font-weight: 600;
  line-height: 78px;
  letter-spacing: -0.5px;
}
.plan ul {
  width: 600px;
  margin: 55px 0 0;
  padding: 0;
  list-style: none;
}
.plan li {
  display: flex;
  gap: 24px;
  margin-bottom: 40px;
}
.plan li svg {
  flex: none;
  margin-top: 7px;
}
.plan li p {
  display: flex;
  flex-direction: column;
  margin: 0;
  font-size: 35px;
  line-height: 46px;
  letter-spacing: -0.25px;
  white-space: nowrap;
}
.plan button {
  width: 680px;
  height: 130px;
  margin-top: 54px;
  border: 0;
  border-radius: 8px;
  background: #d22f27;
  box-shadow: 0 2px 2px rgba(0, 0, 0, 0.25);
  color: #fff;
  font: 400 46px Inter, sans-serif;
  letter-spacing: 1px;
}
.foot {
  flex: none;
  box-sizing: border-box;
  height: 132px;
  padding: 57px 0 0 138px;
  border-top: 2px solid #e4e4e4;
  background: linear-gradient(180deg, #f3f3f3 40%, #dcdcdc 100%);
  color: #737373;
  font-size: 32px;
  line-height: 48px;
  letter-spacing: 0.1px;
}

.dock {
  position: absolute;
  left: 108px;
  top: 2058px;
  box-sizing: border-box;
  width: 3206px;
  height: 146px;
  display: flex;
  padding: 0 2px;
  border: 2px solid #54588f;
  border-radius: 46px;
  background: linear-gradient(180deg, #2b2f64, #333880);
  box-shadow: 0 0 0 1px rgba(10, 12, 40, 0.7), 0 0 50px rgba(0, 0, 0, 0.3);
}
.slot {
  position: relative;
  flex: none;
  display: flex;
  justify-content: center;
  width: 123.400px;
  height: 142px;
}
.slot > svg {
  width: 93px;
  height: 94px;
  margin-top: 19px;
  overflow: visible;
  filter: drop-shadow(0 2px 2px rgba(0, 0, 0, 0.3));
}
.slot.tall > svg {
  width: auto;
  height: 110px;
  margin-top: 10px;
}
.slot.run::after {
  content: '';
  position: absolute;
  left: calc(50% - 4px);
  bottom: 2px;
  width: 8px;
  height: 8px;
  border-radius: 50%;
  background: #abb0f6;
}
.dsep {
  flex: none;
  position: relative;
  width: 2px;
  height: 106px;
  margin: 17px 27.300px 0;
  background: #666bab;
}
.petals rect { mix-blend-mode: multiply; opacity: 0.9; }
.nov { font: 700 22px Inter, sans-serif; fill: #fff; }
.five { font: 300 60px Inter, sans-serif; fill: #222; }
.tv { font: 500 46px Inter, sans-serif; fill: #fff; letter-spacing: -1px; }
.prompt { font: 700 24px 'DejaVu Sans Mono', monospace; fill: #fff; }
.cadA { font: 800 44px Inter, sans-serif; fill: #fff; }
.cadL { font: 700 18px Inter, sans-serif; fill: #fff; }
</style>
